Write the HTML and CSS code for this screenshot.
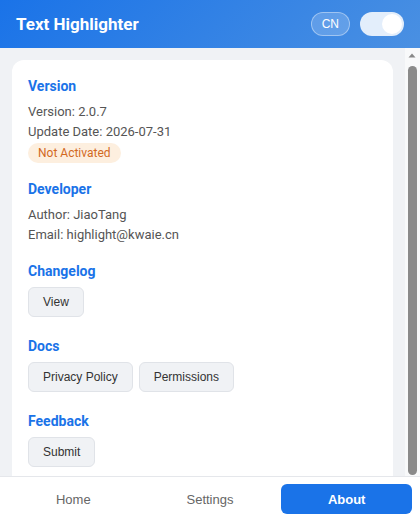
FILE: index.html
```html
<!DOCTYPE html>
<html lang="en">
  <head>
    <meta charset="UTF-8" />
    <meta name="viewport" content="width=device-width, initial-scale=1.0" />
    <title>Text Highlighter</title>
    <link rel="stylesheet" href="styles.css">
  </head>
  <body>
    <div class="header">
      <h1>Text Highlighter</h1>
      <div class="header-actions">
        <button class="lang-btn">CN</button>
        <label class="switch">
          <input type="checkbox" checked>
          <span class="slider"></span>
        </label>
      </div>
    </div>

    <div class="main">
      <div class="content">
        <div class="card">
          <div class="section">
            <h3>Version</h3>
            <p>Version: 2.0.7</p>
            <p>Update Date: 2026-07-31</p>
            <span class="badge">Not Activated</span>
          </div>

          <div class="section">
            <h3>Developer</h3>
            <p>Author: JiaoTang</p>
            <p>Email: highlight@kwaie.cn</p>
          </div>

          <div class="section">
            <h3>Changelog</h3>
            <div class="btn-row">
              <button class="btn">View</button>
            </div>
          </div>

          <div class="section">
            <h3>Docs</h3>
            <div class="btn-row">
              <button class="btn">Privacy Policy</button>
              <button class="btn">Permissions</button>
            </div>
          </div>

          <div class="section">
            <h3>Feedback</h3>
            <div class="btn-row">
              <button class="btn">Submit</button>
            </div>
          </div>
        </div>
      </div>

      <div class="scrollbar">
        <svg class="scroll-arrow" width="15" height="15" viewBox="0 0 15 15">
          <path d="M3.5 9.5L7 5.5L10.5 9.5Z" fill="#888"/>
        </svg>
        <div class="scroll-thumb"></div>
      </div>
    </div>

    <div class="tabbar">
      <button class="tab">Home</button>
      <button class="tab">Settings</button>
      <button class="tab active">About</button>
    </div>
  </body>
</html>
```
FILE: styles.css
```css
body {
  margin: 0;
  width: 420px;
  height: 520px;
  overflow: hidden;
  font-family: -apple-system, BlinkMacSystemFont, 'Segoe UI', Roboto, sans-serif;
  background: #f0f2f5;
  color: #555;
}

button {
  font-family: 'Liberation Sans', Arial, sans-serif;
}

.header {
  height: 48px;
  padding: 0 16px;
  display: flex;
  align-items: center;
  justify-content: space-between;
  background: linear-gradient(135deg, #1a73e8 0%, #4a90e2 100%);
  color: white;
}

.header h1 {
  margin: 0;
  font-size: 17px;
  font-weight: 700;
}

.header-actions {
  display: flex;
  align-items: center;
  gap: 10px;
}

.lang-btn {
  height: 24px;
  padding: 0 10px;
  border: 1px solid rgba(255, 255, 255, 0.4);
  border-radius: 12px;
  background: rgba(255, 255, 255, 0.18);
  color: white;
  font-size: 12px;
}

.switch {
  position: relative;
  display: block;
  width: 44px;
  height: 24px;
}

.switch input {
  display: none;
}

.slider {
  position: absolute;
  inset: 0;
  border-radius: 12px;
  background: rgba(255, 255, 255, 0.85);
}

.slider::before {
  content: "";
  position: absolute;
  top: 2px;
  right: 2px;
  width: 20px;
  height: 20px;
  border-radius: 50%;
  background: white;
}

.main {
  height: 472px;
  display: flex;
}

.content {
  flex: 1;
  overflow: hidden;
  padding: 12px;
}

/* scroll rail on the right of the panel */
.scrollbar {
  width: 15px;
  flex: none;
  display: flex;
  flex-direction: column;
  align-items: center;
  background: #f8f9fa;
}

.scroll-arrow {
  display: block;
  flex: none;
}

.scroll-thumb {
  width: 9px;
  height: 409px;
  margin-top: 3px;
  border-radius: 5px;
  background: #8a8a8a;
}

.card {
  background: white;
  border-radius: 12px;
  padding: 16px 16px 32px;
}

.section {
  margin-bottom: 16px;
}

.section:last-child {
  margin-bottom: 0;
}

.section h3 {
  margin: 0 0 6px 0;
  font-size: 14px;
  line-height: 20px;
  color: #1a73e8;
}

.section p {
  margin: 0;
  font-size: 13px;
  line-height: 20px;
}

.badge {
  display: inline-block;
  padding: 0 10px;
  border-radius: 10px;
  background: #fdefdf;
  color: #d2691e;
  font-size: 12px;
  line-height: 20px;
}

.btn-row {
  display: flex;
  gap: 6px;
  padding-bottom: 3px;
}

.btn {
  height: 30px;
  padding: 0 14px;
  border: 1px solid #e0e3e8;
  border-radius: 6px;
  background: #f0f2f5;
  color: #333;
  font-size: 12px;
}

.tabbar {
  position: fixed;
  left: 0;
  right: 0;
  bottom: 0;
  height: 44px;
  padding: 7px 8px 6px;
  box-sizing: border-box;
  display: grid;
  grid-template-columns: repeat(3, 1fr);
  gap: 6px;
  background: white;
  border-top: 1px solid #e5e7eb;
}

.tab {
  border: none;
  border-radius: 6px;
  background: transparent;
  color: #666;
  font-size: 13px;
}

.tab.active {
  background: #1a73e8;
  color: white;
  font-weight: 700;
}
```
